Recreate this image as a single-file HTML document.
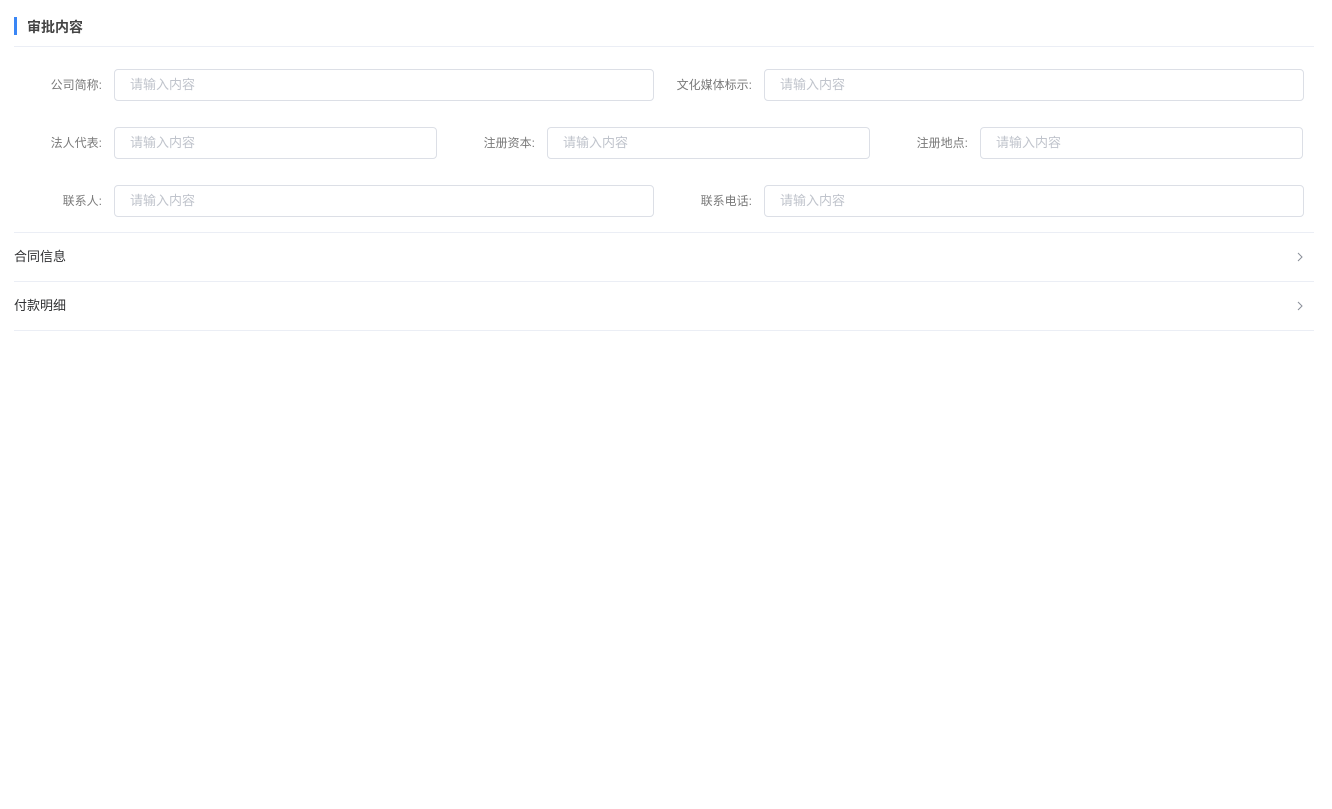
<!DOCTYPE html>
<html><head><meta charset="utf-8"><style>
*{box-sizing:border-box;margin:0;padding:0}
body{width:1332px;height:809px;background:#fff;font-family:"Liberation Sans","Noto Sans CJK SC",sans-serif;position:relative;overflow:hidden}
.bar{position:absolute;left:14px;top:17px;width:3px;height:18px;background:#3a86f5}
.title{position:absolute;left:27px;top:17px;line-height:20px;font-size:14px;font-weight:bold;color:#444}
.hl{position:absolute;left:14px;width:1300px;height:1px;background:#ebeef5}
.lab{position:absolute;font-size:12px;color:#7a7a7a;text-align:right;line-height:32px;width:100px}
.inp{position:absolute;height:32px;border:1px solid #dcdfe6;border-radius:4px;font-size:13px;color:#c0c4cc;line-height:30px;padding-left:15px}
.ct{position:absolute;left:14px;font-size:13px;color:#303133;line-height:20px}
.ar{position:absolute;left:1296px;width:8px;height:12px}
</style></head><body>
<div class="bar"></div><div class="title">审批内容</div>
<div class="hl" style="top:46px"></div>

<div class="lab" style="left:2px;top:69px">公司简称:</div>
<div class="inp" style="left:114px;top:69px;width:540px">请输入内容</div>
<div class="lab" style="left:652px;top:69px">文化媒体标示:</div>
<div class="inp" style="left:764px;top:69px;width:540px">请输入内容</div>

<div class="lab" style="left:2px;top:127px">法人代表:</div>
<div class="inp" style="left:114px;top:127px;width:323px">请输入内容</div>
<div class="lab" style="left:435px;top:127px">注册资本:</div>
<div class="inp" style="left:547px;top:127px;width:323px">请输入内容</div>
<div class="lab" style="left:868px;top:127px">注册地点:</div>
<div class="inp" style="left:980px;top:127px;width:323px">请输入内容</div>

<div class="lab" style="left:2px;top:185px">联系人:</div>
<div class="inp" style="left:114px;top:185px;width:540px">请输入内容</div>
<div class="lab" style="left:652px;top:185px">联系电话:</div>
<div class="inp" style="left:764px;top:185px;width:540px">请输入内容</div>

<div class="hl" style="top:232px"></div>
<div class="ct" style="top:247px">合同信息</div>
<svg class="ar" style="top:251px" viewBox="0 0 8 12"><path d="M2 2L6 6L2 10" fill="none" stroke="#8a8f99" stroke-width="1"/></svg>
<div class="hl" style="top:281px"></div>
<div class="ct" style="top:296px">付款明细</div>
<svg class="ar" style="top:300px" viewBox="0 0 8 12"><path d="M2 2L6 6L2 10" fill="none" stroke="#8a8f99" stroke-width="1"/></svg>
<div class="hl" style="top:330px"></div>
</body></html>
